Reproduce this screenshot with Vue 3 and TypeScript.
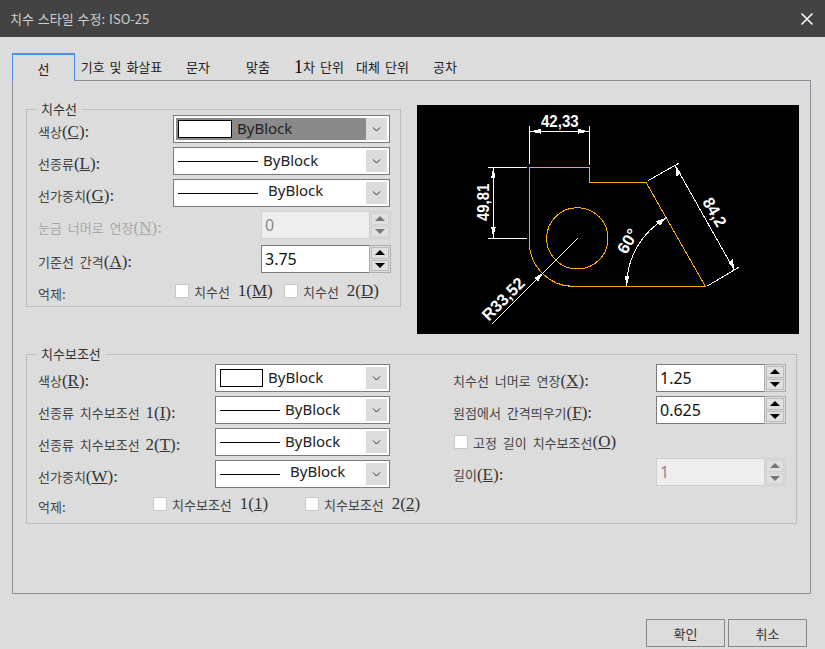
<script setup lang="ts">
interface Lab { ko: string; pre: string; k: string }
interface ComboRow extends Lab { kind: 'color' | 'line' | 'weight'; selected?: boolean }

const tabs = [
  { t: '선', w: 63 },
  { t: '기호 및 화살표', w: 93 },
  { t: '문자', w: 60 },
  { t: '맞춤', w: 60 },
  { t: '차 단위', w: 62, lead: '1' },
  { t: '대체 단위', w: 65 },
  { t: '공차', w: 60 },
]

const lineRows: ComboRow[] = [
  { ko: '색상', pre: '', k: 'C', kind: 'color', selected: true },
  { ko: '선종류', pre: '', k: 'L', kind: 'line' },
  { ko: '선가중치', pre: '', k: 'G', kind: 'weight' },
]
const extRows: ComboRow[] = [
  { ko: '색상', pre: '', k: 'R', kind: 'color' },
  { ko: '선종류 치수보조선 ', pre: '1', k: 'I', kind: 'line' },
  { ko: '선종류 치수보조선 ', pre: '2', k: 'T', kind: 'line' },
  { ko: '선가중치', pre: '', k: 'W', kind: 'weight' },
]
</script>

<template>
  <div class="dialog">
    <header class="titlebar">
      <span class="title">치수 스타일 수정: ISO-25</span>
      <svg class="close" width="14" height="14" viewBox="0 0 14 14">
        <path d="M1.500 1.500L12.500 12.500M12.500 1.500L1.500 12.500" stroke="#fff" stroke-width="1.500" fill="none" />
      </svg>
    </header>

    <nav class="tabs">
      <div
        v-for="(tab, i) in tabs"
        :key="tab.t"
        class="tab"
        :class="{ active: i === 0 }"
        :style="{ width: tab.w + 'px' }"
      >
        <span v-if="tab.lead" class="lead">{{ tab.lead }}</span>{{ tab.t }}
      </div>
    </nav>

    <main class="panel">
      <div class="top">
        <section class="group g1">
          <span class="legend">치수선</span>
          <div v-for="r in lineRows" :key="r.k" class="row">
            <label class="lab w135"><span class="ko">{{ r.ko }}</span><span class="lat">(<u>{{ r.k }}</u>):</span></label>
            <div class="combo wide">
              <div class="combo-body" :class="{ selected: r.selected }">
                <template v-if="r.kind === 'color'">
                  <span class="swatch big"></span><span class="val g5">ByBlock</span>
                </template>
                <template v-else>
                  <span class="sample big" :class="{ heavy: r.kind === 'weight' }"></span>
                  <span class="val" :class="r.kind === 'weight' ? 'g10' : 'g5'">ByBlock</span>
                </template>
              </div>
              <span class="drop">
                <svg width="9" height="5" viewBox="0 0 9 5"><path d="M1 .5L4.500 4L8 .5" stroke="#333" fill="none" /></svg>
              </span>
            </div>
          </div>

          <div class="row">
            <label class="lab w223 dim"><span class="ko">눈금 너머로 연장</span><span class="lat">(<u>N</u>):</span></label>
            <div class="spin off">
              <div class="field">0</div>
              <div class="btns">
                <span class="btn"><i class="tri up"></i></span>
                <span class="btn"><i class="tri down"></i></span>
              </div>
            </div>
          </div>
          <div class="row mt2">
            <label class="lab w223"><span class="ko">기준선 간격</span><span class="lat">(<u>A</u>):</span></label>
            <div class="spin">
              <div class="field">3.75</div>
              <div class="btns">
                <span class="btn"><i class="tri up"></i></span>
                <span class="btn"><i class="tri down"></i></span>
              </div>
            </div>
          </div>
          <div class="row chk mt2">
            <label class="lab w137"><span class="ko">억제:</span></label>
            <div class="item i109"><span class="box"></span><span class="ko">치수선 </span><span class="lat">1(<u>M</u>)</span></div>
            <div class="item"><span class="box"></span><span class="ko">치수선 </span><span class="lat">2(<u>D</u>)</span></div>
          </div>
        </section>

        <div class="preview">
          <svg width="382" height="229" viewBox="21 30 1146 687">
            <g fill="none" stroke="#ffab00" stroke-width="3" shape-rendering="crispEdges">
              <path d="M358 440V216.500H538V262H708L886 574H490A132 134 0 0 1 358 440Z" />
              <circle cx="502" cy="430" r="92" />
            </g>
            <g fill="none" stroke="#fff" stroke-width="3" shape-rendering="crispEdges">
              <path d="M358 94V206M538 94V210M360 109H537" />
              <path d="M234 216.500H352M234 430H352M250 216V430" />
              <path d="M714 257L806 205M892 573L986 517M796 212L972 524" />
              <path d="M650 574A236 236 0 0 1 770 368" />
              <path d="M245 688L503 430" />
            </g>
            <g fill="#fff" shape-rendering="crispEdges">
              <path d="M360 109L392 102V116Z" />
              <path d="M537 109L505 102V116Z" />
              <path d="M250 218L243 250H257Z" />
              <path d="M250 428L243 396H257Z" />
              <path d="M796 212L799 244L813 235Z" />
              <path d="M972 524L969 492L955 501Z" />
              <path d="M650 574L644 542H658Z" />
              <path d="M770 368L738 378L750 391Z" />
              <path d="M398 535L373 548L385 560Z" />
            </g>
            <g class="dimtext">
              <text x="393" y="97" textLength="113" lengthAdjust="spacingAndGlyphs">42,33</text>
              <text transform="translate(238 378) rotate(-90)" textLength="112" lengthAdjust="spacingAndGlyphs">49,81</text>
              <text transform="translate(876 320) rotate(60)" textLength="92" lengthAdjust="spacingAndGlyphs">84,2</text>
              <text transform="translate(649 480) rotate(-60)" textLength="76" lengthAdjust="spacingAndGlyphs">60°</text>
              <text transform="translate(236 680) rotate(-45)" textLength="158" lengthAdjust="spacingAndGlyphs">R33,52</text>
            </g>
          </svg>
        </div>
      </div>

      <section class="group g2">
        <span class="legend">치수보조선</span>
        <div class="cols">
          <div class="col-left">
            <div v-for="r in extRows" :key="r.k" class="row">
              <label class="lab w177"><span class="ko">{{ r.ko }}</span><span class="lat">{{ r.pre }}(<u>{{ r.k }}</u>):</span></label>
              <div class="combo narrow">
                <div class="combo-body">
                  <template v-if="r.kind === 'color'">
                    <span class="swatch small"></span><span class="val g5">ByBlock</span>
                  </template>
                  <template v-else>
                    <span class="sample small" :class="{ heavy: r.kind === 'weight' }"></span>
                    <span class="val" :class="r.kind === 'weight' ? 'g10' : 'g5'">ByBlock</span>
                  </template>
                </div>
                <span class="drop">
                  <svg width="9" height="5" viewBox="0 0 9 5"><path d="M1 .5L4.500 4L8 .5" stroke="#333" fill="none" /></svg>
                </span>
              </div>
            </div>
            <div class="row chk">
              <label class="lab w115"><span class="ko">억제:</span></label>
              <div class="item i152"><span class="box"></span><span class="ko">치수보조선 </span><span class="lat">1(<u>1</u>)</span></div>
              <div class="item"><span class="box"></span><span class="ko">치수보조선 </span><span class="lat">2(<u>2</u>)</span></div>
            </div>
          </div>

          <div class="col-right">
            <div class="row">
              <label class="lab w203"><span class="ko">치수선 너머로 연장</span><span class="lat">(<u>X</u>):</span></label>
              <div class="spin">
                <div class="field">1.25</div>
                <div class="btns">
                  <span class="btn"><i class="tri up"></i></span>
                  <span class="btn"><i class="tri down"></i></span>
                </div>
              </div>
            </div>
            <div class="row">
              <label class="lab w203"><span class="ko">원점에서 간격띄우기</span><span class="lat">(<u>F</u>):</span></label>
              <div class="spin">
                <div class="field">0.625</div>
                <div class="btns">
                  <span class="btn"><i class="tri up"></i></span>
                  <span class="btn"><i class="tri down"></i></span>
                </div>
              </div>
            </div>
            <div class="row">
              <div class="item fixed"><span class="box"></span><span class="ko">고정 길이 치수보조선</span><span class="lat">(<u>O</u>)</span></div>
            </div>
            <div class="row pull-up">
              <label class="lab w203"><span class="ko">길이</span><span class="lat">(<u>E</u>):</span></label>
              <div class="spin off">
                <div class="field">1</div>
                <div class="btns">
                  <span class="btn"><i class="tri up"></i></span>
                  <span class="btn"><i class="tri down"></i></span>
                </div>
              </div>
            </div>
          </div>
        </div>
      </section>
    </main>

    <footer class="footer">
      <button class="action" type="button">확인</button>
      <button class="action" type="button">취소</button>
    </footer>
  </div>
</template>

<style scoped>
.dialog {
  width: 825px;
  height: 649px;
  overflow: hidden;
  background: #dcdcdc;
  display: flex;
  flex-direction: column;
  font-family: "Noto Sans CJK KR", "Noto Sans", sans-serif;
  color: #333;
}
.titlebar {
  height: 37px;
  flex: none;
  background: #434343;
  display: flex;
  align-items: center;
  justify-content: space-between;
  padding: 0 11px 0 10px;
  box-sizing: border-box;
}
.title {
  color: #cfcfcf;
  font-size: 13px;
  word-spacing: 1px;
}
.tabs {
  display: flex;
  height: 28px;
  box-sizing: border-box;
  margin: 16px 14px 0 12px;
  border-bottom: 1px solid #8e8e98;
  flex: none;
}
.tab {
  height: 27px;
  box-sizing: border-box;
  display: flex;
  align-items: center;
  justify-content: center;
  font-size: 13px;
  word-spacing: 2px;
  color: #222;
  white-space: pre;
}
.tab.active {
  height: 28px;
  border: 1px solid #4a90e9;
  border-top-width: 2px;
  border-bottom: none;
  background: #dcdcdc;
}
.lead {
  font-family: "Liberation Serif", serif;
  font-size: 18px;
  line-height: 1;
  color: #000;
}
.panel {
  margin-left: 12px;
  width: 799px;
  height: 513px;
  flex: none;
  box-sizing: border-box;
  border: 1px solid #8e8e98;
  border-top: none;
  padding: 24px 0 0 13px;
}
.top {
  display: flex;
  align-items: flex-start;
  height: 229px;
}
.group {
  position: relative;
  box-sizing: border-box;
  border: 1px solid #bdbdbd;
}
.legend {
  position: absolute;
  top: -9px;
  left: 9px;
  padding: 0 5px;
  background: #dcdcdc;
  font-size: 13px;
  line-height: 16px;
  color: #333;
}
.g1 {
  width: 375px;
  height: 198px;
  margin-top: 4px;
  padding: 5px 0 0 11px;
  display: flex;
  flex-direction: column;
  gap: 4px;
}
.preview {
  width: 382px;
  height: 229px;
  margin-left: 16px;
  background: #000;
  flex: none;
}
.preview svg {
  display: block;
}
.dimtext text {
  font-family: "Liberation Sans", sans-serif;
  font-weight: 700;
  font-size: 50px;
  fill: #fff;
}
.g2 {
  width: 771px;
  height: 170px;
  margin-top: 20px;
  padding: 9px 0 0 11px;
}
.cols {
  display: flex;
  gap: 63px;
}
.col-left,
.col-right {
  display: flex;
  flex-direction: column;
  gap: 4px;
}
.col-left {
  width: 352px;
}
.row {
  display: flex;
  align-items: center;
  height: 28px;
  flex: none;
}
.row.chk {
  height: 24px;
}
.mt2 {
  margin-top: 2px;
}
.pull-up {
  margin-top: -2px;
}
.lab {
  display: block;
  flex: none;
  white-space: pre;
  padding-top: 3px;
  line-height: 20px;
}
.w135 { width: 135px; }
.w223 { width: 223px; }
.w137 { width: 137px; }
.w177 { width: 177px; }
.w115 { width: 115px; }
.w203 { width: 203px; }
.ko {
  font-size: 13px;
  word-spacing: 3px;
  white-space: pre;
  color: #444;
}
.lat {
  font-family: "Liberation Serif", serif;
  font-size: 17px;
  color: #333;
  white-space: pre;
}
.dim .ko,
.dim .lat {
  color: #a8a8a8;
}
.combo {
  height: 28px;
  box-sizing: border-box;
  border: 1px solid #7a7a7a;
  padding: 2px;
  background: #fff;
  display: flex;
  align-items: stretch;
  flex: none;
}
.wide { width: 217px; }
.narrow { width: 175px; }
.combo-body {
  flex: 1;
  display: flex;
  align-items: center;
  padding-left: 2px;
  min-width: 0;
}
.combo-body.selected {
  background: #8a8a8a;
}
.drop {
  width: 21px;
  flex: none;
  background: #dcdcdc;
  display: flex;
  align-items: center;
  justify-content: center;
}
.val {
  font-family: "Noto Sans", sans-serif;
  font-size: 15px;
  line-height: 20px;
  color: #222;
  margin-bottom: 2px;
}
.g5 { margin-left: 5px; }
.g10 { margin-left: 10px; margin-bottom: 6px; }
.swatch {
  box-sizing: border-box;
  height: 18px;
  background: #fff;
  border: 1px solid #000;
  flex: none;
}
.swatch.big { width: 54px; }
.swatch.small { width: 43px; }
.sample {
  height: 1px;
  background: #000;
  flex: none;
}
.sample.big { width: 80px; }
.sample.small { width: 60px; }
.spin {
  width: 130px;
  height: 28px;
  display: flex;
  flex: none;
}
.field {
  width: 108px;
  box-sizing: border-box;
  background: #fff;
  border: 1px solid #7a7a7a;
  border-right: none;
  padding-left: 3px;
  display: flex;
  align-items: center;
  font-family: "Noto Sans", sans-serif;
  font-size: 16px;
  color: #111;
}
.btns {
  width: 22px;
  box-sizing: border-box;
  border: 1px solid #adadad;
  padding: 1px;
  display: flex;
  flex-direction: column;
  gap: 1px;
}
.btn {
  flex: 1;
  background: #e0e0e0;
  border: 1px solid #bcbcbc;
  display: flex;
  align-items: center;
  justify-content: center;
}
.tri {
  width: 0;
  height: 0;
  border-left: 5px solid transparent;
  border-right: 5px solid transparent;
}
.tri.up { border-bottom: 5px solid #000; }
.tri.down { border-top: 5px solid #000; }
.spin.off .field {
  background: #eeeeee;
  border-color: #cfcfcf;
  color: #8a8a8a;
}
.spin.off .btns { border-color: #cfcfcf; }
.spin.off .btn { border-color: #d2d2d2; }
.spin.off .tri.up { border-bottom-color: #777; }
.spin.off .tri.down { border-top-color: #777; }
.item {
  display: flex;
  align-items: center;
  flex: none;
  white-space: pre;
}
.i109 { width: 109px; }
.i152 { width: 152px; }
.item .ko { word-spacing: 5px; }
.fixed { margin-left: 1px; }
.item.fixed .ko { word-spacing: 3px; }
.box {
  width: 14px;
  height: 14px;
  box-sizing: border-box;
  background: #fff;
  border: 1px solid #c8c8c8;
  margin-right: 5px;
  flex: none;
}
.footer {
  display: flex;
  gap: 3px;
  padding: 25px 0 0 646px;
  flex: none;
}
.action {
  width: 79px;
  height: 28px;
  box-sizing: border-box;
  border: 1px solid #888;
  background: #dcdcdc;
  padding: 0;
  font-family: inherit;
  font-size: 13px;
  color: #333;
}
</style>
